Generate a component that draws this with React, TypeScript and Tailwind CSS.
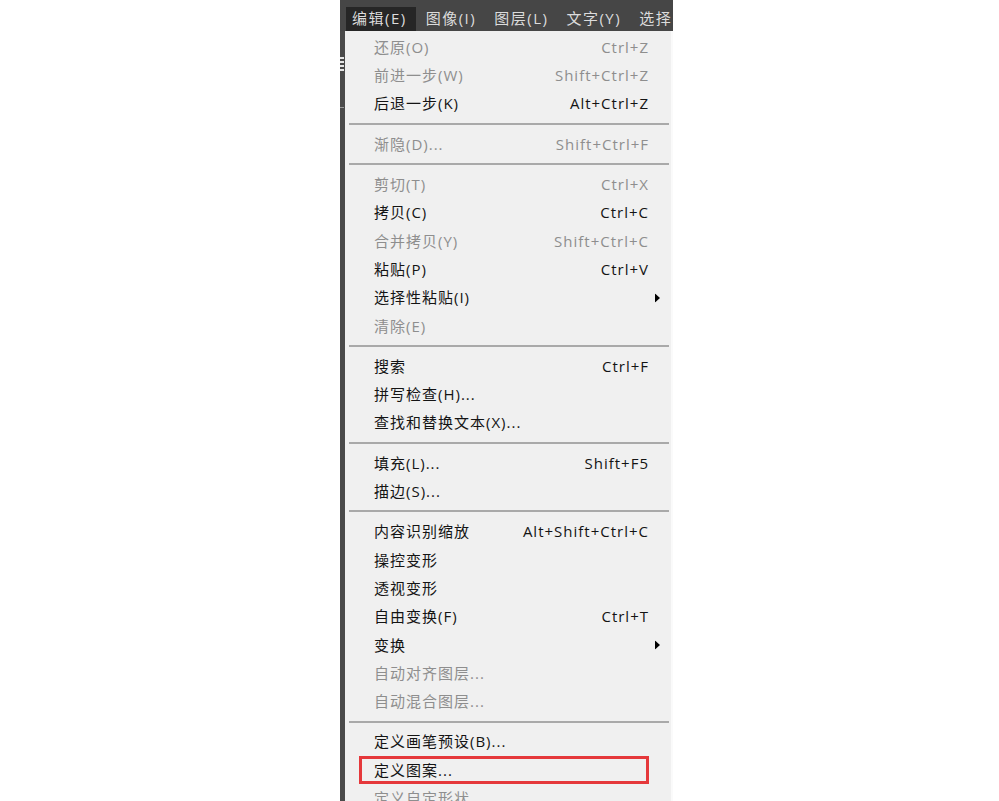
import React from "react";

type Item =
  | { type: "sep" }
  | { type: "item"; label: string; shortcut?: string; disabled?: boolean; sub?: boolean; mark?: boolean };

const items: Item[] = [
  { type: "item", label: "还原(O)", shortcut: "Ctrl+Z", disabled: true },
  { type: "item", label: "前进一步(W)", shortcut: "Shift+Ctrl+Z", disabled: true },
  { type: "item", label: "后退一步(K)", shortcut: "Alt+Ctrl+Z" },
  { type: "sep" },
  { type: "item", label: "渐隐(D)...", shortcut: "Shift+Ctrl+F", disabled: true },
  { type: "sep" },
  { type: "item", label: "剪切(T)", shortcut: "Ctrl+X", disabled: true },
  { type: "item", label: "拷贝(C)", shortcut: "Ctrl+C" },
  { type: "item", label: "合并拷贝(Y)", shortcut: "Shift+Ctrl+C", disabled: true },
  { type: "item", label: "粘贴(P)", shortcut: "Ctrl+V" },
  { type: "item", label: "选择性粘贴(I)", sub: true },
  { type: "item", label: "清除(E)", disabled: true },
  { type: "sep" },
  { type: "item", label: "搜索", shortcut: "Ctrl+F" },
  { type: "item", label: "拼写检查(H)..." },
  { type: "item", label: "查找和替换文本(X)..." },
  { type: "sep" },
  { type: "item", label: "填充(L)...", shortcut: "Shift+F5" },
  { type: "item", label: "描边(S)..." },
  { type: "sep" },
  { type: "item", label: "内容识别缩放", shortcut: "Alt+Shift+Ctrl+C" },
  { type: "item", label: "操控变形" },
  { type: "item", label: "透视变形" },
  { type: "item", label: "自由变换(F)", shortcut: "Ctrl+T" },
  { type: "item", label: "变换", sub: true },
  { type: "item", label: "自动对齐图层...", disabled: true },
  { type: "item", label: "自动混合图层...", disabled: true },
  { type: "sep" },
  { type: "item", label: "定义画笔预设(B)..." },
  { type: "item", label: "定义图案...", mark: true },
  { type: "item", label: "定义自定形状...", disabled: true },
];

const menus = ["编辑(E)", "图像(I)", "图层(L)", "文字(Y)", "选择"];

export default function App() {
  return (
    <div
      className="w-[999px] h-[801px] bg-white overflow-hidden flex"
      style={{ fontFamily: '"Open Sans", "Noto Sans CJK SC", sans-serif' }}
    >
      <div className="ml-[340px] w-[333px] h-full flex flex-col overflow-hidden">
        {/* top menu bar */}
        <div className="h-[31px] shrink-0 bg-[#464646] flex items-end pl-[6px] overflow-hidden whitespace-nowrap">
          {menus.map((m, i) => (
            <div
              key={m}
              className={
                "h-[24px] pb-[2px] flex items-center text-[15px] tracking-[1.5px] text-[#dcdcdc] shrink-0 " +
                (i === 0 ? "bg-[#262626] pl-[6px] pr-[9px] mr-[1px]" : "px-[9px]")
              }
            >
              {m}
            </div>
          ))}
        </div>
        <div className="flex-1 flex min-h-0">
          {/* left dark strip */}
          <div className="w-[5px] shrink-0 bg-[#4a4a4a] flex flex-col">
            <div className="h-[26px] shrink-0" />
            <div className="h-[2px] w-[4px] shrink-0 bg-[#e6e6e6]" />
            <div className="h-[2px] shrink-0" />
            <div className="h-[2px] w-[4px] shrink-0 bg-[#e6e6e6]" />
            <div className="h-[2px] shrink-0" />
            <div className="h-[2px] w-[4px] shrink-0 bg-[#e6e6e6]" />
            <div className="h-[2px] shrink-0" />
            <div className="h-[2px] w-[4px] shrink-0 bg-[#e6e6e6]" />
            <div className="h-[36px] shrink-0" />
            <div className="h-[1px] w-[4px] shrink-0 bg-[#9a9a9a]" />
          </div>
          {/* dropdown panel */}
          <div className="w-[326px] shrink-0 bg-[#f0f0f0] pt-[2px] flex flex-col">
            {items.map((it, idx) =>
              it.type === "sep" ? (
                <div key={idx} className="h-[12px] shrink-0 flex items-center pl-[4px] pr-[2px]">
                  <div className="h-[2px] w-full bg-[#a9a9a9]" />
                </div>
              ) : (
                <div
                  key={idx}
                  className={
                    "relative h-[28.3px] shrink-0 flex items-center pl-[29px] pr-[22px] text-[15px] tracking-[1px] whitespace-nowrap " +
                    (it.disabled ? "text-[#8e8e8e]" : "text-[#141414]")
                  }
                >
                  <span className="flex-1">{it.label}</span>
                  {it.shortcut && <span>{it.shortcut}</span>}
                  {it.sub && (
                    <svg
                      className="absolute right-[11px] top-1/2 -translate-y-1/2"
                      width="5"
                      height="9"
                      viewBox="0 0 5 9"
                    >
                      <path d="M0 0 L5 4.5 L0 9 Z" fill="#000" />
                    </svg>
                  )}
                  {it.mark && (
                    <div className="absolute left-[14px] right-[22px] top-0 bottom-0 border-[3px] border-[#e5383b]" />
                  )}
                </div>
              )
            )}
          </div>
          <div className="flex-1 bg-[#fafafa]" />
        </div>
      </div>
    </div>
  );
}
